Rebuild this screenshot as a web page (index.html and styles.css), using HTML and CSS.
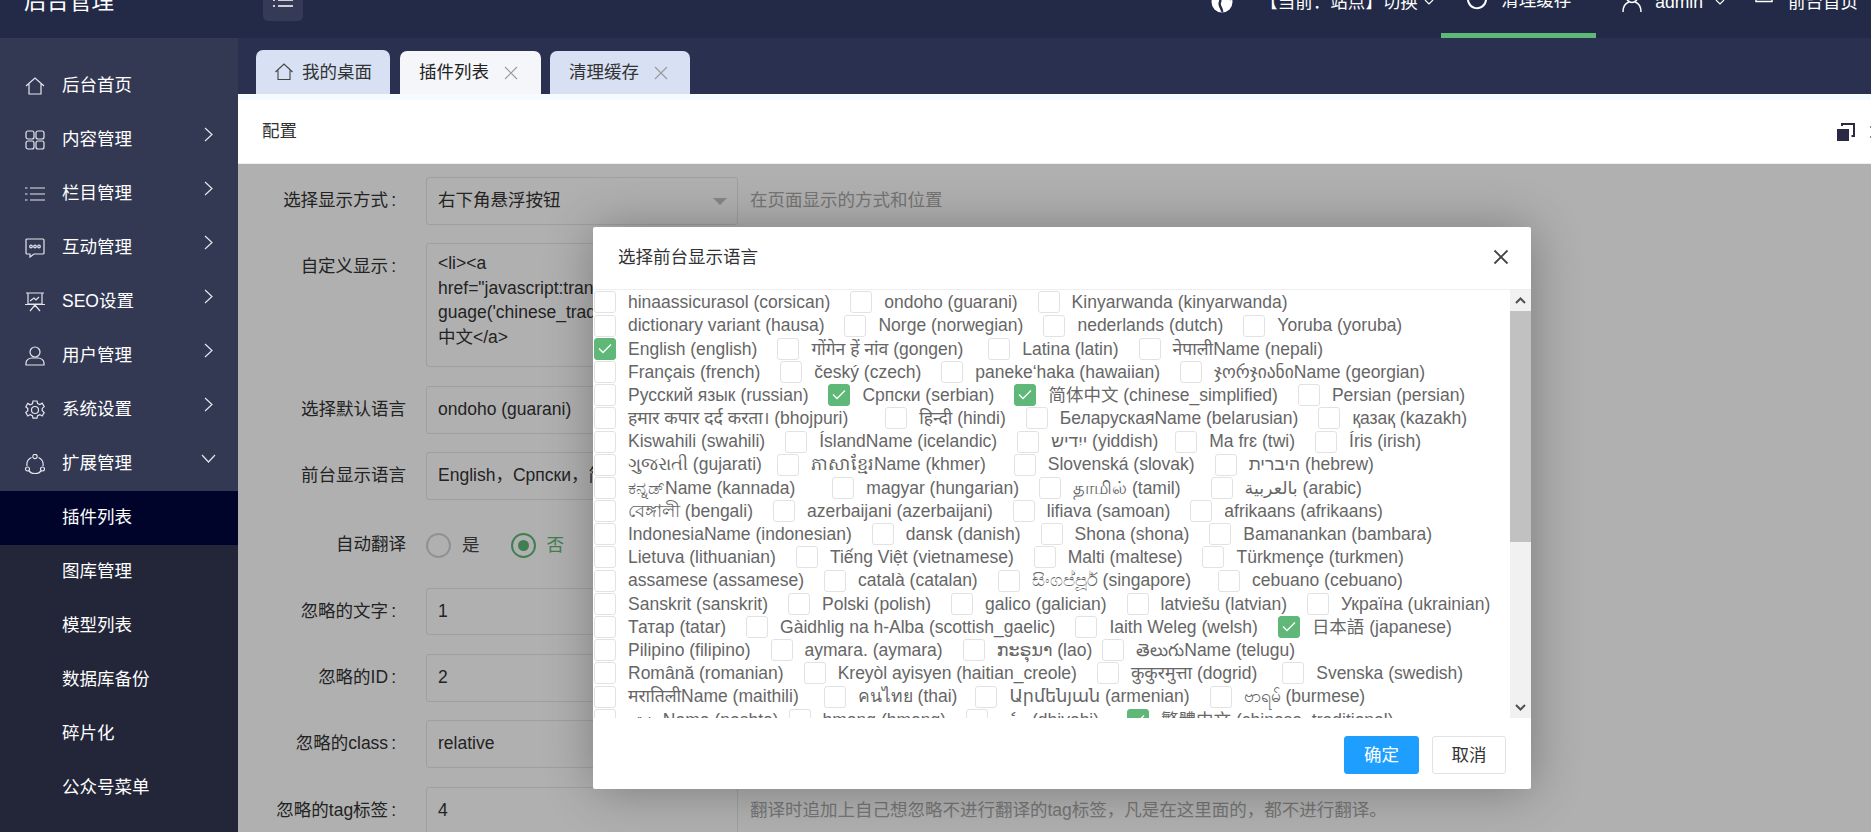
FILE: index.html
```html
<!DOCTYPE html>
<html lang="zh-CN">
<head>
<meta charset="utf-8">
<title>后台管理</title>
<link rel="stylesheet" href="styles.css">
</head>
<body>
<div class="app">
  <header class="top">
    <div class="brand">后台管理</div>
    <div class="menu-btn"><svg width="22" height="22" viewBox="0 0 22 22"><path d="M1 4h2M6 4h15M1 10h2M6 10h15M1 16h2M6 16h15" stroke="#fff" stroke-width="1.5" fill="none"/></svg></div>
    <nav class="top-nav">
      <div class="tn tn-globe"><svg width="22" height="22" viewBox="0 0 22 22"><circle cx="11" cy="11" r="10.5" fill="#fff"/><path d="M8 1c-3 5 3 6 1 10s3 7 2 10M15 2c-2 4 3 6 5 6" stroke="#222a47" stroke-width="2.4" fill="none"/></svg></div>
      <div class="tn tn-site">【当前：站点】切换<svg class="caret" width="10" height="6" viewBox="0 0 10 6"><path d="M1 1l4 4 4-4" stroke="#fff" stroke-width="1.2" fill="none"/></svg></div>
      <div class="tn tn-clear"><svg width="20" height="22" viewBox="0 0 20 22"><path d="M16 3.5A9 9 0 1 0 19 11" stroke="#fff" stroke-width="2" fill="none"/></svg><span>清理缓存</span></div>
      <div class="tn tn-user"><svg width="20" height="22" viewBox="0 0 20 22"><circle cx="10" cy="6" r="5.5" stroke="#fff" stroke-width="1.5" fill="none"/><path d="M1 21c0-6 3-9 6-10M19 21c0-6-3-9-6-10" stroke="#fff" stroke-width="1.5" fill="none"/></svg><span>admin</span><svg class="caret" width="10" height="6" viewBox="0 0 10 6"><path d="M1 1l4 4 4-4" stroke="#fff" stroke-width="1.2" fill="none"/></svg></div>
      <div class="tn tn-home"><svg width="18" height="22" viewBox="0 0 18 22"><path d="M1 1h16v9.5H1z" stroke="#fff" stroke-width="1.5" fill="none"/></svg><span>前台首页</span></div>
    </nav>
  </header>

  <div class="layout">
    <aside class="side">
      <ul class="nav-main">
        <li class="nav-row"><svg class="ni" viewBox="0 0 20 20"><path d="M1 10l9-8 9 8M4 8v10h12V8"/></svg>后台首页</li>
        <li class="nav-row"><svg class="ni" viewBox="0 0 20 20"><rect x="1" y="1" width="8" height="8" rx="2"/><rect x="11" y="1" width="8" height="8" rx="2"/><rect x="1" y="11" width="8" height="8" rx="2"/><rect x="11" y="11" width="8" height="8" rx="2"/></svg>内容管理<svg class="chev" viewBox="0 0 9 15"><path d="M1 1l7 6.500-7 6.500"/></svg></li>
        <li class="nav-row"><svg class="ni" viewBox="0 0 20 20"><path d="M0 4h2.500M5 4h15M0 10h2.500M5 10h15M0 16h2.500M5 16h15"/></svg>栏目管理<svg class="chev" viewBox="0 0 9 15"><path d="M1 1l7 6.500-7 6.500"/></svg></li>
        <li class="nav-row"><svg class="ni" viewBox="0 0 20 20"><path d="M2 1h16a1 1 0 0 1 1 1v13a1 1 0 0 1-1 1H9l-4 3v-3H2a1 1 0 0 1-1-1V2a1 1 0 0 1 1-1z"/><circle cx="6" cy="8.500" r="1.300"/><circle cx="10" cy="8.500" r="1.300"/><circle cx="14" cy="8.500" r="1.300"/></svg>互动管理<svg class="chev" viewBox="0 0 9 15"><path d="M1 1l7 6.500-7 6.500"/></svg></li>
        <li class="nav-row"><svg class="ni" viewBox="0 0 20 20"><path d="M1 1h18M3 1v11h14V1M0 12.500h20M5 19l5-6 5 6M5 9l4-3 2 2 3-3"/></svg>SEO设置<svg class="chev" viewBox="0 0 9 15"><path d="M1 1l7 6.500-7 6.500"/></svg></li>
        <li class="nav-row"><svg class="ni" viewBox="0 0 20 20"><circle cx="10" cy="6" r="5"/><path d="M1 19v-2c0-3 3-5 6-5h6c3 0 6 2 6 5v2z"/></svg>用户管理<svg class="chev" viewBox="0 0 9 15"><path d="M1 1l7 6.500-7 6.500"/></svg></li>
        <li class="nav-row"><svg class="ni" viewBox="0 0 20 20"><circle cx="10" cy="10" r="3.500"/><path d="M8 1h4l.6 2.600 2.300 1 2.300-1.400 2 3.400-2 1.800v2.400l2 1.800-2 3.400-2.300-1.400-2.300 1-.6 2.600H8l-.6-2.600-2.300-1-2.300 1.400-2-3.400 2-1.800V8.600l-2-1.800 2-3.400 2.300 1.400 2.300-1z"/></svg>系统设置<svg class="chev" viewBox="0 0 9 15"><path d="M1 1l7 6.500-7 6.500"/></svg></li>
        <li class="nav-row"><svg class="ni" viewBox="0 0 20 20"><path d="M6.500 3.500A8 8 0 0 0 2 12M13.500 3.500A8 8 0 0 1 18 12M4 17a8 8 0 0 0 12 0"/><circle cx="10" cy="2.500" r="2.200"/><circle cx="2.500" cy="15" r="2"/><circle cx="17.500" cy="15" r="2"/></svg>扩展管理<svg class="chev-down" viewBox="0 0 15 9"><path d="M1 1l6.500 7L14 1"/></svg></li>
      </ul>
      <ul class="nav-sub">
        <li class="nav-row active">插件列表</li>
        <li class="nav-row">图库管理</li>
        <li class="nav-row">模型列表</li>
        <li class="nav-row">数据库备份</li>
        <li class="nav-row">碎片化</li>
        <li class="nav-row">公众号菜单</li>
      </ul>
    </aside>

    <main class="main">
      <div class="tabs">
        <div class="tab tab-home"><svg width="18" height="18" viewBox="0 0 18 18"><path d="M.5 9L9 1l8.500 8M3 7.500V16.500h12V7.500" stroke="#444" stroke-width="1.100" fill="none"/></svg><span>我的桌面</span></div>
        <div class="tab tab-on"><span>插件列表</span><svg class="x" width="14" height="14" viewBox="0 0 14 14"><path d="M1 1l12 12M13 1L1 13" stroke="#999" stroke-width="1.100"/></svg></div>
        <div class="tab tab-third"><span>清理缓存</span><svg class="x" width="14" height="14" viewBox="0 0 14 14"><path d="M1 1l12 12M13 1L1 13" stroke="#999" stroke-width="1.100"/></svg></div>
      </div>
      <div class="band"></div>
      <div class="head">
        <span>配置</span>
        <span class="head-tools"><svg width="18" height="18" viewBox="0 0 18 18"><path d="M0 6h12v12H0z" fill="#2a2a45"/><path d="M5 3V1h12v12h-2.500" stroke="#2a2a45" stroke-width="2" fill="none"/></svg><i class="sliver"></i></span>
      </div>
      <div class="stage">
        <form class="form">
          <div class="frow">
            <label class="lab colon">选择显示方式<span class="cl">:</span></label>
            <div class="ctl sel">右下角悬浮按钮<i class="tri"></i></div>
            <span class="help">在页面显示的方式和位置</span>
          </div>
          <div class="frow">
            <label class="lab colon lab-top">自定义显示<span class="cl">:</span></label>
            <div class="ctl area">&lt;li&gt;&lt;a<br>href="javascript:translate.changeLan<br>guage('chinese_traditional');"&gt;繁體<br>中文&lt;/a&gt;</div>
          </div>
          <div class="frow">
            <label class="lab">选择默认语言</label>
            <div class="ctl sel">ondoho (guarani)</div>
          </div>
          <div class="frow">
            <label class="lab">前台显示语言</label>
            <div class="ctl sel clip">English，Српски，简体中文，日本語，繁體中文</div>
          </div>
          <div class="frow frow-radio">
            <label class="lab lab-radio">自动翻译</label>
            <div class="radios">
              <i class="radio"></i><span class="rt">是</span>
              <i class="radio radio-on"></i><span class="rt rt-on">否</span>
            </div>
          </div>
          <div class="frow">
            <label class="lab colon">忽略的文字<span class="cl">:</span></label>
            <div class="ctl sel">1</div>
          </div>
          <div class="frow">
            <label class="lab colon">忽略的ID<span class="cl">:</span></label>
            <div class="ctl sel">2</div>
          </div>
          <div class="frow">
            <label class="lab colon">忽略的class<span class="cl">:</span></label>
            <div class="ctl sel">relative</div>
          </div>
          <div class="frow">
            <label class="lab colon">忽略的tag标签<span class="cl">:</span></label>
            <div class="ctl sel">4</div>
            <span class="help">翻译时追加上自己想忽略不进行翻译的tag标签，凡是在这里面的，都不进行翻译。</span>
          </div>
        </form>
        <div class="overlay"></div>
        <section class="modal">
          <div class="modal-head">
            <span>选择前台显示语言</span>
            <svg width="16" height="16" viewBox="0 0 16 16"><path d="M1.500 1.500l13 13M14.500 1.500l-13 13" stroke="#444" stroke-width="1.800"/></svg>
          </div>
          <div class="modal-body">
            <div class="langs">
              <div class="lrow"><span class="it"><i class="cb"></i>hinaassicurasol (corsican)</span><span class="it"><i class="cb"></i>ondoho (guarani)</span><span class="it"><i class="cb"></i>Kinyarwanda (kinyarwanda)</span></div>
              <div class="lrow"><span class="it"><i class="cb"></i>dictionary variant (hausa)</span><span class="it"><i class="cb"></i>Norge (norwegian)</span><span class="it"><i class="cb"></i>nederlands (dutch)</span><span class="it"><i class="cb"></i>Yoruba (yoruba)</span></div>
              <div class="lrow"><span class="it"><i class="cb on"><svg width="14" height="10" viewBox="0 0 14 10"><path d="M1 4.500l4 4 8-8" stroke="#fff" stroke-width="1.300" fill="none"/></svg></i>English (english)</span><span class="it plus5"><i class="cb"></i>गोंगेन हें नांव (gongen)</span><span class="it"><i class="cb"></i>Latina (latin)</span><span class="it"><i class="cb"></i>नेपालीName (nepali)</span></div>
              <div class="lrow"><span class="it"><i class="cb"></i>Français (french)</span><span class="it"><i class="cb"></i>český (czech)</span><span class="it"><i class="cb"></i>panekeʻhaka (hawaiian)</span><span class="it"><i class="cb"></i>ჯორჯიანიName (georgian)</span></div>
              <div class="lrow"><span class="it"><i class="cb"></i>Русский язык (russian)</span><span class="it"><i class="cb on"><svg width="14" height="10" viewBox="0 0 14 10"><path d="M1 4.500l4 4 8-8" stroke="#fff" stroke-width="1.300" fill="none"/></svg></i>Српски (serbian)</span><span class="it"><i class="cb on"><svg width="14" height="10" viewBox="0 0 14 10"><path d="M1 4.500l4 4 8-8" stroke="#fff" stroke-width="1.300" fill="none"/></svg></i>简体中文 (chinese_simplified)</span><span class="it"><i class="cb"></i>Persian (persian)</span></div>
              <div class="lrow"><span class="it plus17"><i class="cb"></i>हमार कपार दर्द करता। (bhojpuri)</span><span class="it"><i class="cb"></i>हिन्दी (hindi)</span><span class="it"><i class="cb"></i>БеларускаяName (belarusian)</span><span class="it"><i class="cb"></i>қазақ (kazakh)</span></div>
              <div class="lrow"><span class="it"><i class="cb"></i>Kiswahili (swahili)</span><span class="it"><i class="cb"></i>ÍslandName (icelandic)</span><span class="it minus3"><i class="cb"></i>ייִדיש (yiddish)</span><span class="it"><i class="cb"></i>Ma frɛ (twi)</span><span class="it"><i class="cb"></i>Íris (irish)</span></div>
              <div class="lrow"><span class="it minus5"><i class="cb"></i>ગુજરાતી (gujarati)</span><span class="it plus8"><i class="cb"></i>ភាសាខ្មែរName (khmer)</span><span class="it"><i class="cb"></i>Slovenská (slovak)</span><span class="it"><i class="cb"></i>היברית (hebrew)</span></div>
              <div class="lrow"><span class="it plus17"><i class="cb"></i>ಕನ್ನಡ್Name (kannada)</span><span class="it"><i class="cb"></i>magyar (hungarian)</span><span class="it plus10"><i class="cb"></i>தாமில் (tamil)</span><span class="it"><i class="cb"></i>بالعربية (arabic)</span></div>
              <div class="lrow"><span class="it"><i class="cb"></i>বেঙ্গালী (bengali)</span><span class="it"><i class="cb"></i>azerbaijani (azerbaijani)</span><span class="it"><i class="cb"></i>lifiava (samoan)</span><span class="it"><i class="cb"></i>afrikaans (afrikaans)</span></div>
              <div class="lrow"><span class="it"><i class="cb"></i>IndonesiaName (indonesian)</span><span class="it"><i class="cb"></i>dansk (danish)</span><span class="it"><i class="cb"></i>Shona (shona)</span><span class="it"><i class="cb"></i>Bamanankan (bambara)</span></div>
              <div class="lrow"><span class="it"><i class="cb"></i>Lietuva (lithuanian)</span><span class="it"><i class="cb"></i>Tiếng Việt (vietnamese)</span><span class="it"><i class="cb"></i>Malti (maltese)</span><span class="it"><i class="cb"></i>Türkmençe (turkmen)</span></div>
              <div class="lrow"><span class="it"><i class="cb"></i>assamese (assamese)</span><span class="it"><i class="cb"></i>català (catalan)</span><span class="it plus7"><i class="cb"></i>සිංගප්පූර් (singapore)</span><span class="it"><i class="cb"></i>cebuano (cebuano)</span></div>
              <div class="lrow"><span class="it"><i class="cb"></i>Sanskrit (sanskrit)</span><span class="it"><i class="cb"></i>Polski (polish)</span><span class="it"><i class="cb"></i>galico (galician)</span><span class="it"><i class="cb"></i>latviešu (latvian)</span><span class="it"><i class="cb"></i>Україна (ukrainian)</span></div>
              <div class="lrow"><span class="it"><i class="cb"></i>Татар (tatar)</span><span class="it"><i class="cb"></i>Gàidhlig na h-Alba (scottish_gaelic)</span><span class="it"><i class="cb"></i>Iaith Weleg (welsh)</span><span class="it"><i class="cb on"><svg width="14" height="10" viewBox="0 0 14 10"><path d="M1 4.500l4 4 8-8" stroke="#fff" stroke-width="1.300" fill="none"/></svg></i>日本語 (japanese)</span></div>
              <div class="lrow"><span class="it"><i class="cb"></i>Pilipino (filipino)</span><span class="it"><i class="cb"></i>aymara. (aymara)</span><span class="it minus10"><i class="cb"></i>ກະຣຸນາ (lao)</span><span class="it"><i class="cb"></i>తెలుగుName (telugu)</span></div>
              <div class="lrow"><span class="it"><i class="cb"></i>Română (romanian)</span><span class="it"><i class="cb"></i>Kreyòl ayisyen (haitian_creole)</span><span class="it plus5"><i class="cb"></i>कुकुरमुत्ता (dogrid)</span><span class="it"><i class="cb"></i>Svenska (swedish)</span></div>
              <div class="lrow"><span class="it plus5"><i class="cb"></i>मरातिलीName (maithili)</span><span class="it minus2"><i class="cb"></i>คนไทย (thai)</span><span class="it"><i class="cb"></i>Արմենյան (armenian)</span><span class="it"><i class="cb"></i>ဗာရမ် (burmese)</span></div>
              <div class="lrow"><span class="it minus10"><i class="cb"></i>پښتوName (pashto)</span><span class="it"><i class="cb"></i>hmong (hmong)</span><span class="it plus8"><i class="cb"></i>ދިވެހި (dhivehi)</span><span class="it"><i class="cb on"><svg width="14" height="10" viewBox="0 0 14 10"><path d="M1 4.500l4 4 8-8" stroke="#fff" stroke-width="1.300" fill="none"/></svg></i>繁體中文 (chinese_traditional)</span></div>
            </div>
            <div class="sbar">
              <div class="sbtn"><svg width="11" height="7" viewBox="0 0 11 7"><path d="M1 6l4.500-4.500L10 6" stroke="#505050" stroke-width="2" fill="none"/></svg></div>
              <div class="sthumb"></div>
              <div class="strack"></div>
              <div class="sbtn"><svg width="11" height="7" viewBox="0 0 11 7"><path d="M1 1l4.500 4.500L10 1" stroke="#505050" stroke-width="2" fill="none"/></svg></div>
            </div>
          </div>
          <div class="modal-foot">
            <button type="button" class="btn btn-ok">确定</button>
            <button type="button" class="btn btn-no">取消</button>
          </div>
        </section>
      </div>
    </main>
  </div>
</div>
</body>
</html>
```
FILE: styles.css
```css
* { box-sizing: border-box; }
html, body { margin: 0; padding: 0; height: 100%; overflow: hidden; }
body { font: 17.5px/1.4 "Liberation Sans", "Noto Sans CJK SC", "Noto Sans", "DejaVu Sans", sans-serif; color: #333; background: #fff; }
ul { list-style: none; margin: 0; padding: 0; }

.app { margin-top: -28px; height: 860px; display: flex; flex-direction: column; }

.top { height: 66px; flex: none; background: #222a47; color: #fff; display: flex; align-items: flex-start; position: relative; }
.brand { width: 263px; padding-left: 24px; font-size: 22.5px; line-height: 60px; height: 60px; }
.menu-btn { width: 40px; height: 49px; background: #353b57; border-radius: 5px; display: flex; justify-content: center; padding-top: 18px; }
.top-nav { margin-left: auto; display: flex; height: 66px; padding-right: 13px; }
.tn { display: flex; align-items: center; height: 60px; line-height: 60px; white-space: nowrap; }
.tn svg { flex: none; }
.tn-globe { margin-right: 27px; }
.tn-site { width: 181px; }
.caret { margin-left: 6px; }
.tn-clear { width: 155px; height: 66px; padding: 0 0 6px 26px; border-bottom: 5px solid #5fb878; gap: 14px; }
.tn-user { margin-left: 26px; gap: 13px; }
.tn-user .caret { margin-left: -1px; }
.tn-home { margin-left: 30px; gap: 15px; }

.layout { flex: 1; display: flex; min-height: 0; }

.side { width: 238px; flex: none; background: #232639; color: #fff; display: flex; flex-direction: column; }
.nav-main { background: #333853; padding-top: 20.700px; }
.nav-row { height: 54px; display: flex; align-items: center; padding-left: 62px; position: relative; }
.active { background: #00042a; }
.ni { position: absolute; left: 25px; top: 17px; width: 20px; height: 20px; fill: none; stroke: #e4e6ee; stroke-width: 1.200; }
.chev { position: absolute; left: 204px; top: 14px; width: 9px; height: 15px; fill: none; stroke: #e4e6ee; stroke-width: 1.200; }
.chev-down { position: absolute; left: 201px; top: 17px; width: 15px; height: 9px; fill: none; stroke: #e4e6ee; stroke-width: 1.200; }

.main { flex: 1; min-width: 0; display: flex; flex-direction: column; }
.tabs { height: 56px; flex: none; background: #2a3150; display: flex; align-items: flex-end; padding-left: 18px; }
.tab { height: 43px; display: flex; align-items: center; background: #d8e0f3; border-radius: 7px 7px 0 0; }
.tab-home { height: 44px; width: 134px; padding-left: 19px; gap: 9px; margin-right: 10px; }
.tab-on { width: 141px; padding-left: 19px; background: #f5f6f9; color: #222; margin-right: 9px; }
.tab-third { width: 140px; padding-left: 19px; }
.x { margin-left: 15px; }
.band { height: 6px; flex: none; background: #f5fbfe; }
.head { height: 64px; flex: none; background: #fff; border-bottom: 1px solid #eee; display: flex; align-items: center; justify-content: space-between; padding-left: 24px; }
.head-tools { display: flex; align-items: center; gap: 15px; }
.sliver { display: block; width: 1px; height: 12px; border-top: 2px solid #888; border-bottom: 2px solid #888; }

.stage { flex: 1; position: relative; overflow: hidden; background: #fff; min-height: 0; }
.form { padding-top: 13px; }
.frow { display: flex; align-items: flex-start; margin-bottom: 18.750px; }
.frow-radio { height: 50.500px; margin-bottom: 18.750px; }
.lab { width: 168px; flex: none; margin-right: 20px; text-align: right; line-height: 47.500px; white-space: nowrap; }
.colon { padding-right: 10px; }
.cl { margin-left: 3px; }
.lab-top { line-height: 46px; }
.lab-radio { line-height: 51.500px; }
.ctl { width: 312px; height: 47.500px; flex: none; border: 1px solid #e6e6e6; border-radius: 3px; padding-left: 11px; line-height: 45.500px; background: #fff; position: relative; }
.clip { overflow: hidden; white-space: nowrap; }
.area { height: 124px; line-height: 24.600px; padding-top: 7px; word-break: break-all; }
.tri { position: absolute; left: 286px; top: 20px; width: 0; height: 0; border: 7px solid transparent; border-top: 7px solid #c2c2c2; border-bottom: 0; }
.help { margin-left: 12px; line-height: 47.500px; color: #aaa; white-space: nowrap; }
.radios { display: flex; align-items: center; height: 54px; }
.radio { width: 25px; height: 25px; border: 2px solid #d2d2d2; border-radius: 50%; display: block; }
.radio-on { border-color: #5fb878; position: relative; }
.radio-on::after { content: ""; position: absolute; left: 5px; top: 5px; width: 11px; height: 11px; border-radius: 50%; background: #5fb878; }
.rt { margin-left: 11px; margin-right: 31px; color: #444; }
.rt-on { color: #5fb878; }

.overlay { position: absolute; inset: 0; background: rgba(0, 0, 0, .31); }

.modal { position: absolute; left: 355px; top: 63px; width: 938px; height: 562px; background: #fff; border-radius: 2px; box-shadow: 1px 1px 50px rgba(0, 0, 0, .3); display: flex; flex-direction: column; }
.modal-head { height: 63px; flex: none; border-bottom: 1px solid #eee; display: flex; align-items: center; justify-content: space-between; padding: 0 22px 2px 25px; }
.modal-body { height: 428px; flex: none; display: flex; overflow: hidden; }
.langs { flex: 1; min-width: 0; overflow: hidden; padding: .8px 0 0 1px; color: #666; white-space: nowrap; }
.lrow { height: 23.200px; display: flex; align-items: center; }
.it { display: inline-flex; align-items: center; margin-right: 20px; }
.plus5 { margin-right: 25px; }
.plus7 { margin-right: 27px; }
.plus8 { margin-right: 28px; }
.plus10 { margin-right: 30px; }
.plus17 { margin-right: 37px; }
.minus2 { margin-right: 18px; }
.minus3 { margin-right: 17px; }
.minus5 { margin-right: 15px; }
.minus10 { margin-right: 10px; }
.cb { display: flex; align-items: center; justify-content: center; width: 22px; height: 22px; flex: none; margin-right: 12px; border: 1px solid #e2e2e2; border-radius: 3px; background: #fff; }
.cb.on { background: #5fb878; border-color: #5fb878; }
.sbar { width: 21px; flex: none; display: flex; flex-direction: column; background: #f1f1f1; }
.sbtn { height: 21px; flex: none; display: flex; align-items: center; justify-content: center; }
.sthumb { height: 231px; flex: none; background: #c1c1c1; }
.strack { flex: 1; }
.modal-foot { flex: 1; display: flex; justify-content: flex-end; align-items: flex-start; padding: 18px 25px 0 0; gap: 13px; }
.btn { height: 38px; width: 74px; padding: 0; font: inherit; border-radius: 3px; border: 1px solid #e2e2e2; background: #fff; color: #333; }
.btn-ok { width: 75px; background: #1e9fff; border-color: #1e9fff; color: #fff; }
```
